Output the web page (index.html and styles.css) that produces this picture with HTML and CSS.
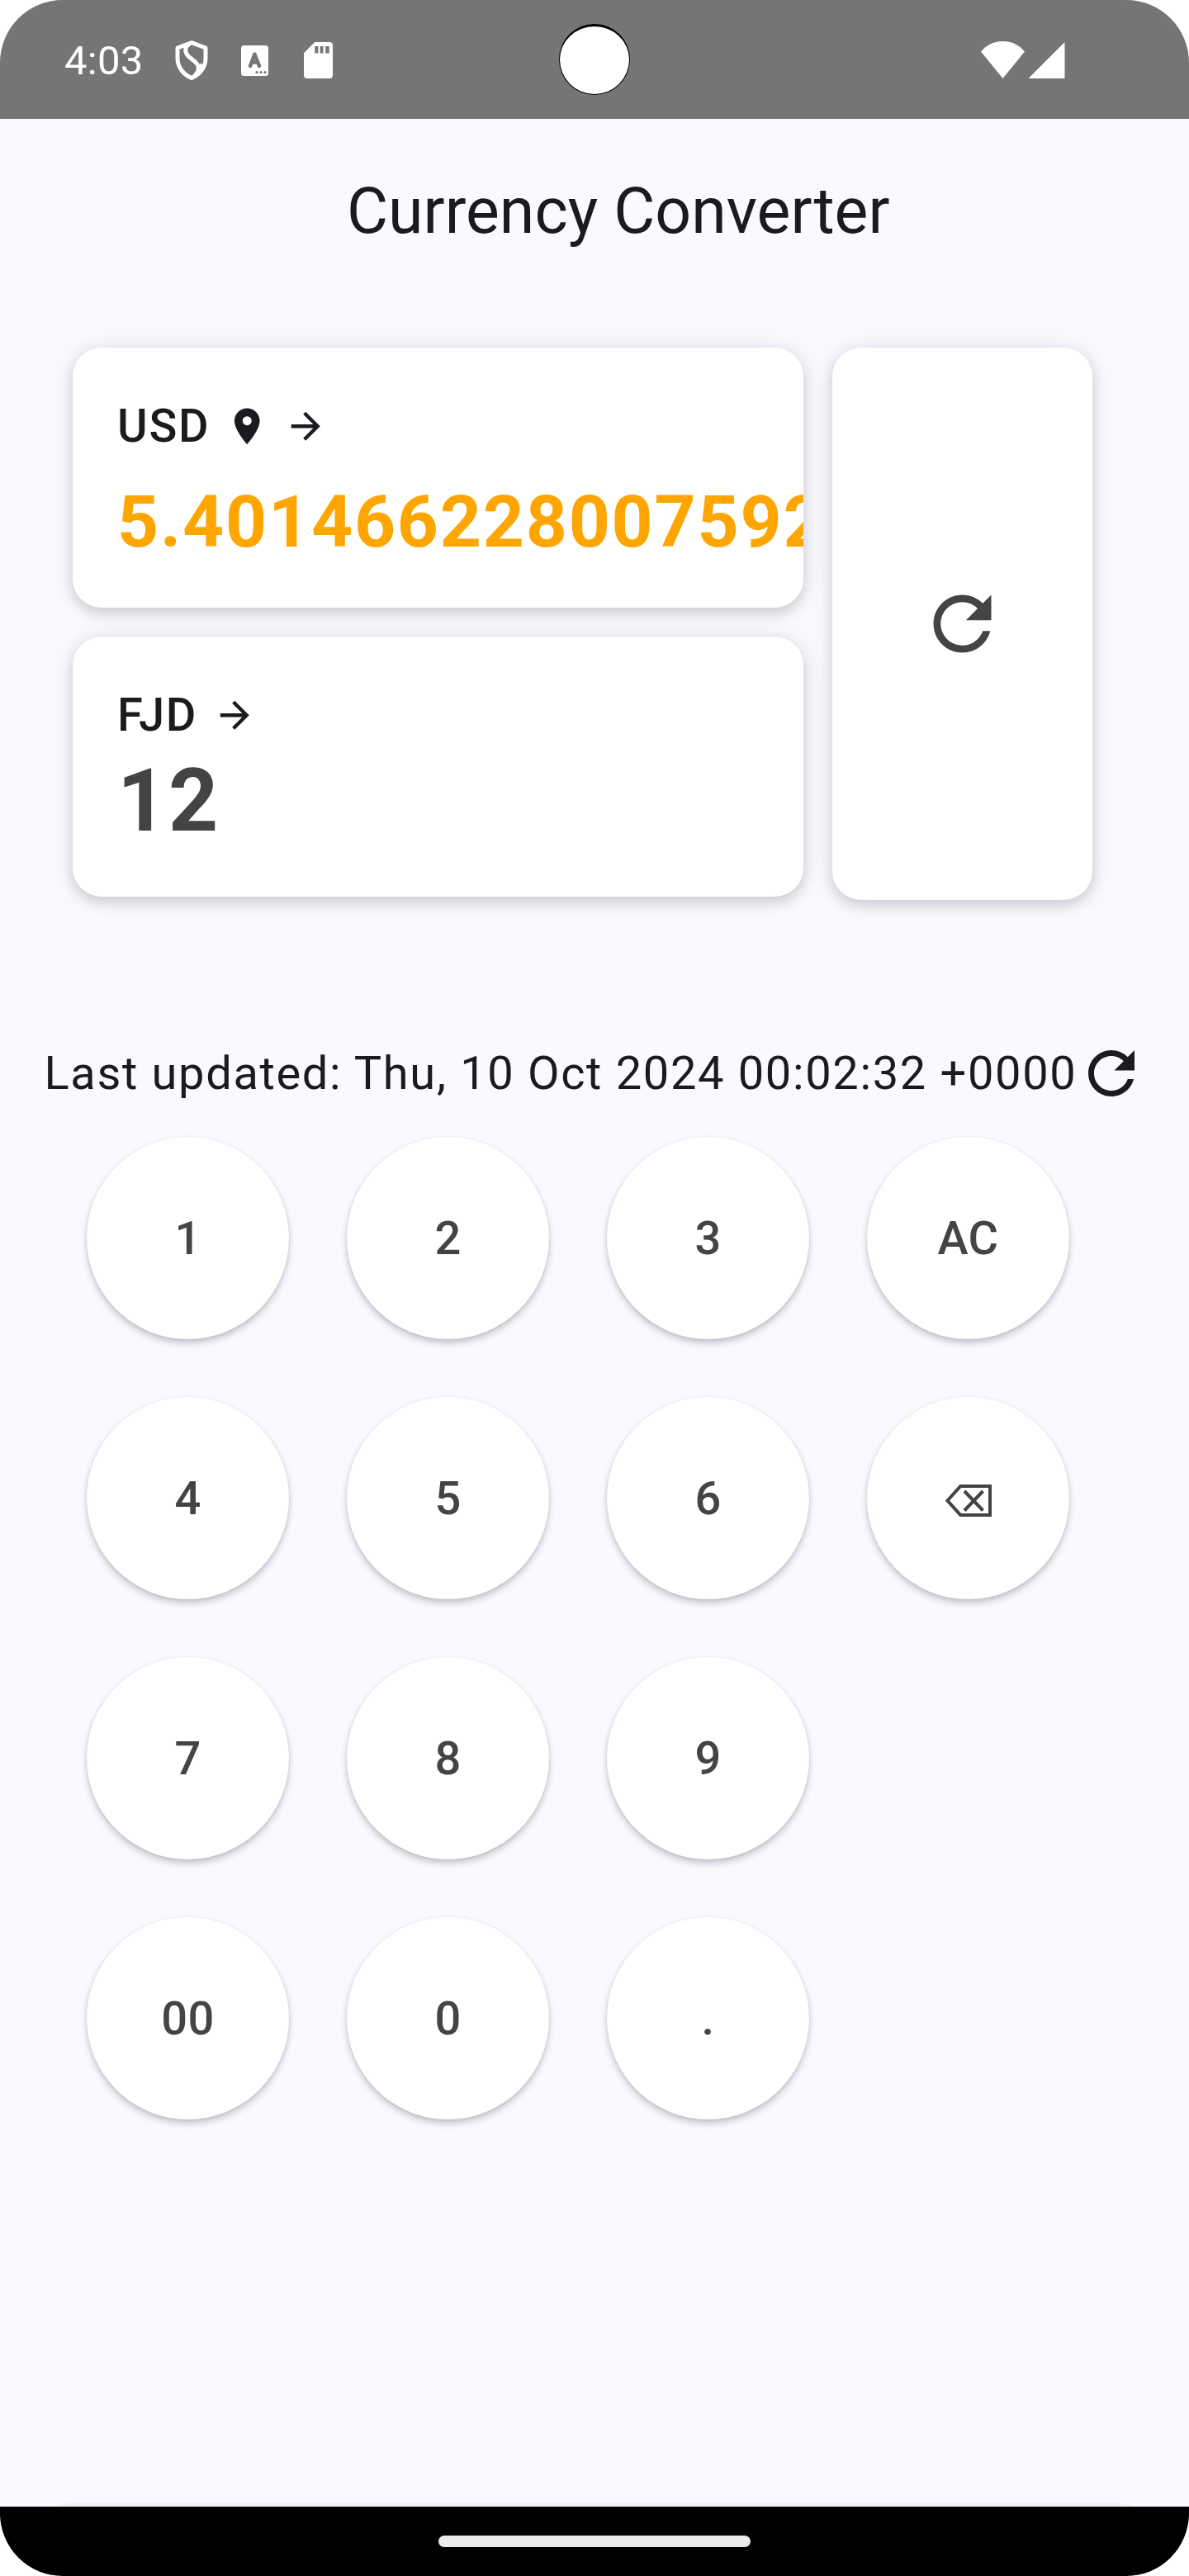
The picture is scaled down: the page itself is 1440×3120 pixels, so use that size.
FILE: index.html
```html
<!DOCTYPE html>
<html lang="en">
<head>
<meta charset="utf-8">
<title>Currency Converter</title>
<link rel="stylesheet" href="styles.css">
</head>
<body>
<div class="screen">
  <header class="status-bar">
    <span class="clock">4:03</span>
    <svg class="status-shield" width="40" height="48" viewBox="0 0 40 48" fill="none" stroke="#fff" stroke-width="5" stroke-linejoin="round">
      <path d="M20 2.700 37 9v12.500C37 32 30.500 41 20 45.500 9.500 41 3 32 3 21.500V9Z"/>
      <path d="M17.500 4C11 8 11.500 14.500 16.500 19.500L24.500 26C29.500 30.500 30 36.500 23.500 43M29.500 29 33.500 35"/>
    </svg>
    <svg class="status-lang" width="33" height="37" viewBox="0 0 33 37">
      <rect width="33" height="37" rx="3.500" fill="#fff"/>
      <path d="M11 25 16.400 10.500 22 25M13 20.500h7" fill="none" stroke="#757575" stroke-width="4.500" stroke-linecap="round" stroke-linejoin="round"/>
      <g fill="#757575"><circle cx="19" cy="32.500" r="1.600"/><circle cx="24" cy="32.500" r="1.600"/><circle cx="29" cy="32.500" r="1.600"/></g>
    </svg>
    <svg class="status-sd" width="35" height="44" viewBox="0 0 35 44">
      <path d="M13.300 0H31a4 4 0 0 1 4 4V40a4 4 0 0 1-4 4H4a4 4 0 0 1-4-4V13.300Z" fill="#fff"/>
      <path d="M13.300 5h4v8.500h-4zM19.600 5h4v8.500h-4zM26.200 5h4.500v8.500h-4.500z" fill="#757575"/>
    </svg>
    <span class="camera"></span>
    <svg class="status-signal" width="102" height="45" viewBox="0 0 102 45" fill="#fff">
      <path d="M0 12.500C6 5.500 14 0 26.500 0S47 5.500 53 12.500L26.500 45Z"/>
      <path d="M101.500 1V45H57.500Z"/>
    </svg>
  </header>

  <main class="content">
    <h1 class="title">Currency Converter</h1>

    <section class="converter">
      <div class="amounts">
        <div class="card amount">
          <div class="currency">
            <span>USD</span>
            <svg class="icon-small" viewBox="0 0 24 24"><path d="M12 2C8.130 2 5 5.130 5 9c0 5.250 7 13 7 13s7-7.750 7-13c0-3.870-3.130-7-7-7zm0 9.500a2.500 2.500 0 1 1 0-5 2.500 2.500 0 0 1 0 5z"/></svg>
            <svg class="icon-small" viewBox="0 0 24 24"><path d="M12 4l-1.410 1.410L16.170 11H4v2h12.170l-5.580 5.590L12 20l8-8z"/></svg>
          </div>
          <div class="value value-result">5.401466228007592</div>
        </div>
        <div class="card amount">
          <div class="currency">
            <span>FJD</span>
            <svg class="icon-small" viewBox="0 0 24 24"><path d="M12 4l-1.410 1.410L16.170 11H4v2h12.170l-5.580 5.590L12 20l8-8z"/></svg>
          </div>
          <div class="value value-input">12</div>
        </div>
      </div>
      <div class="card swap">
        <svg class="icon-large" viewBox="0 0 24 24"><path d="M17.650 6.350C16.200 4.900 14.210 4 12 4c-4.420 0-7.990 3.580-7.990 8s3.570 8 7.990 8c3.730 0 6.840-2.550 7.730-6h-2.080c-.82 2.330-3.040 4-5.650 4-3.310 0-6-2.690-6-6s2.690-6 6-6c1.660 0 3.140.69 4.220 1.780L13 11h7V4l-2.350 2.350z"/></svg>
      </div>
    </section>

    <div class="updated">
      <span>Last updated: Thu, 10 Oct 2024 00:02:32 +0000</span>
      <svg class="icon-refresh" viewBox="0 0 24 24"><path d="M17.650 6.350C16.200 4.900 14.210 4 12 4c-4.420 0-7.990 3.580-7.990 8s3.570 8 7.990 8c3.730 0 6.840-2.550 7.730-6h-2.080c-.82 2.330-3.040 4-5.650 4-3.310 0-6-2.690-6-6s2.690-6 6-6c1.660 0 3.140.69 4.220 1.780L13 11h7V4l-2.350 2.350z"/></svg>
    </div>

    <section class="keypad">
      <div class="key">1</div><div class="key">2</div><div class="key">3</div><div class="key">AC</div>
      <div class="key">4</div><div class="key">5</div><div class="key">6</div>
      <div class="key">
        <svg class="icon-delete" width="57" height="39" viewBox="0 0 57 39" fill="none" stroke="#444" stroke-width="4">
          <path d="M2.500 19.500 18.300 2H54V37H18.300Z"/>
          <path d="M23 8 45.500 31.500M45.500 8 23 31.500"/>
        </svg>
      </div>
      <div class="key">7</div><div class="key">8</div><div class="key">9</div>
      <div class="key key-row-start">00</div><div class="key">0</div><div class="key">.</div>
    </section>

    <div class="sheet-edge"></div>
  </main>

  <footer class="nav-bar"><span class="nav-handle"></span></footer>
</div>
</body>
</html>
```
FILE: styles.css
```css
* { box-sizing: border-box; }

body {
  margin: 0;
  background: #fff;
  font-family: Roboto, "Liberation Sans", sans-serif;
  color: #1b1b1f;
}

svg { display: block; flex: none; }

.screen {
  display: flex;
  flex-direction: column;
  width: 1440px;
  height: 3120px;
  border-radius: 76px;
  overflow: hidden;
  background: #faf9ff;
}

.status-bar {
  position: relative;
  display: flex;
  align-items: flex-start;
  flex: none;
  height: 144px;
  padding-left: 78px;
  background: #757575;
  color: #fff;
}

.clock {
  width: 134px;
  padding-top: 45px;
  font-size: 49px;
  line-height: 58px;
  letter-spacing: .3px;
}

.status-shield { margin-top: 49px; }
.status-lang { margin: 55px 0 0 40px; }
.status-sd { margin: 51px 0 0 43px; }
.status-signal { margin: 50px 150px 0 auto; }

.camera {
  position: absolute;
  left: 677px;
  top: 29px;
  width: 86px;
  height: 86px;
  border: 1px solid #000;
  border-top-width: 3px;
  border-radius: 50%;
  background: #fff;
}

.content {
  display: flex;
  flex-direction: column;
  flex: 1;
  min-height: 0;
}

.title {
  margin: 63px 0 0 420px;
  font-size: 77px;
  font-weight: 400;
  line-height: 98px;
}

.converter {
  display: flex;
  gap: 35px;
  margin: 116px 0 0 88px;
}

.amounts {
  display: flex;
  flex-direction: column;
  gap: 35px;
  width: 885px;
}

.card {
  border-radius: 35px;
  background: #fff;
  box-shadow: 0 7px 16px rgba(0, 0, 0, .13), 0 2px 28px rgba(0, 0, 0, .1);
}

.amount {
  height: 315px;
  padding: 52px 0 0 54px;
  overflow: hidden;
}

.currency {
  display: flex;
  align-items: center;
  gap: 18.5px;
  height: 85px;
  font-size: 56px;
  font-weight: 500;
  letter-spacing: 1.75px;
}

.currency span { margin-right: .5px; }

.icon-small { width: 52.5px; height: 52.5px; margin-top: 1px; fill: #1b1b1f; }
.icon-large { width: 105px; height: 105px; fill: #444; }
.icon-refresh { width: 84px; height: 84px; fill: #1b1b1f; }

.value {
  font-weight: 700;
  letter-spacing: 1.75px;
  white-space: nowrap;
}

.value-result { font-size: 87.5px; line-height: 149px; color: #ffa500; }
.value-input { font-size: 105px; line-height: 125px; color: #444; }

.swap {
  display: flex;
  align-items: center;
  justify-content: center;
  width: 315px;
  height: 669px;
}

.updated {
  display: flex;
  align-items: center;
  margin: 168px 0 0 53.5px;
  height: 84px;
  font-size: 56px;
  letter-spacing: 1.66px;
  white-space: nowrap;
}

.keypad {
  display: grid;
  grid-template-columns: repeat(4, 245px);
  gap: 70px;
  margin: 35px 0 0 105px;
}

.key {
  display: flex;
  align-items: center;
  justify-content: center;
  height: 245px;
  border-radius: 50%;
  background: #fff;
  color: #444;
  font-size: 56px;
  font-weight: 500;
  letter-spacing: .35px;
  box-shadow: 0 5px 8px rgba(0, 0, 0, .2), 0 1px 4px rgba(0, 0, 0, .08);
}

.key-row-start { grid-column: 1; }

.icon-delete { margin: 6px 0 0 1px; }

.sheet-edge {
  height: 5px;
  margin: auto 68px 0;
  border-radius: 28px 28px 0 0 / 5px 5px 0 0;
  background: #f2f1f6;
}

.nav-bar {
  display: flex;
  justify-content: center;
  flex: none;
  height: 84px;
  padding-top: 35px;
  background: #000;
}

.nav-handle {
  width: 378px;
  height: 14px;
  border-radius: 7px;
  background: #ebebeb;
}
```
